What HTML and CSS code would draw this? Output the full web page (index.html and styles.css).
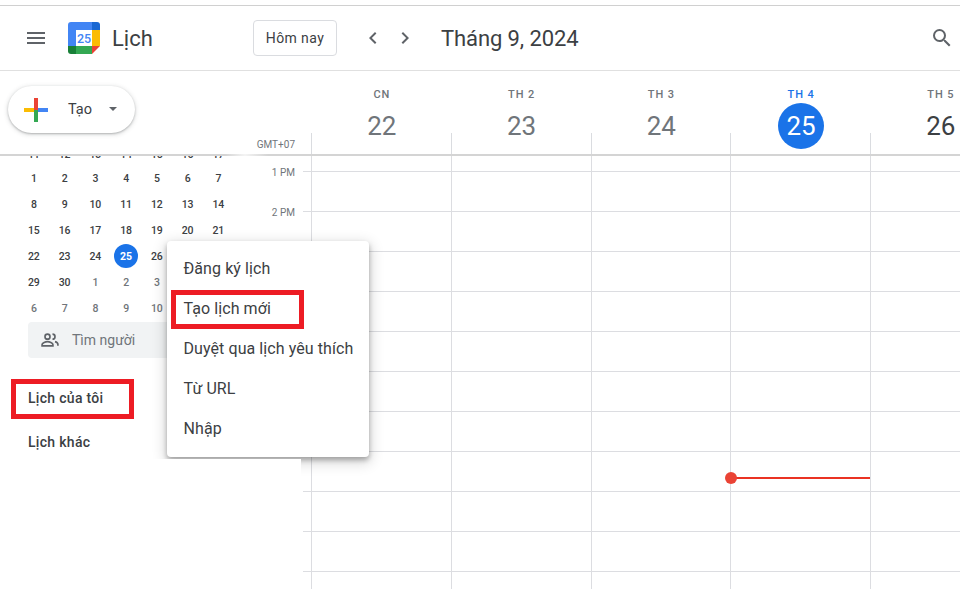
FILE: index.html
```html
<!DOCTYPE html>
<html lang="vi">
<head>
    <meta charset="UTF-8">
    <meta name="viewport" content="width=device-width, initial-scale=1.0">
    <title>Lịch</title>
    <link rel="stylesheet" href="styles.css">
</head>
<body>
    <div class="page">
        <header class="topbar">
            <div class="brand">
                <svg class="icon" viewBox="0 0 24 24"><path d="M3 18h18v-2H3v2zm0-5h18v-2H3v2zm0-7v2h18V6H3z"/></svg>
                <svg class="logo" viewBox="0 0 32 32">
                    <path fill="#4285f4" d="M3 0h21v8H8v16H0V3a3 3 0 0 1 3-3z"/>
                    <path fill="#1967d2" d="M24 0h5a3 3 0 0 1 3 3v5h-8z"/>
                    <rect fill="#fbbc04" x="24" y="8" width="8" height="16"/>
                    <rect fill="#34a853" x="8" y="24" width="16" height="8"/>
                    <path fill="#188038" d="M0 24h8v8H3a3 3 0 0 1-3-3z"/>
                    <polygon fill="#ea4335" points="24,24 32,24 24,32"/>
                    <rect fill="#fff" x="8" y="8" width="16" height="16"/>
                    <text class="logo-num" x="16" y="20.6" text-anchor="middle">25</text>
                </svg>
                <span class="brand-name">Lịch</span>
            </div>
            <button class="today">Hôm nay</button>
            <div class="nav">
                <svg class="icon" viewBox="0 0 24 24"><path d="M15.41 7.41L14 6l-6 6 6 6 1.41-1.41L10.83 12z"/></svg>
                <svg class="icon" viewBox="0 0 24 24"><path d="M10 6L8.59 7.41 13.17 12l-4.58 4.59L10 18l6-6z"/></svg>
            </div>
            <div class="month">Tháng 9, 2024</div>
            <svg class="icon search" viewBox="0 0 24 24"><path d="M15.5 14h-.79l-.28-.27A6.471 6.471 0 0 0 16 9.5 6.5 6.5 0 1 0 9.5 16c1.61 0 3.09-.59 4.23-1.57l.27.28v.79l5 4.99L20.49 19l-4.99-5zm-6 0C7.01 14 5 11.99 5 9.5S7.01 5 9.5 5 14 7.01 14 9.5 11.99 14 9.5 14z"/></svg>
        </header>

        <div class="week-head">
            <div class="create-wrap">
                <button class="create">
                    <svg class="plus" viewBox="0 0 24 24">
                        <rect fill="#fbbc04" x="0" y="10" width="12" height="4"/>
                        <rect fill="#4285f4" x="12" y="10" width="12" height="4"/>
                        <rect fill="#34a853" x="10" y="12" width="4" height="12"/>
                        <rect fill="#ea4335" x="10" y="0" width="4" height="12"/>
                    </svg>
                    <span class="create-text">Tạo</span>
                    <span class="caret"></span>
                </button>
            </div>
            <div class="gmt">GMT+07</div>
            <div class="day"><div class="day-name">CN</div><div class="day-num">22</div></div>
            <div class="day"><div class="day-name">TH 2</div><div class="day-num">23</div></div>
            <div class="day"><div class="day-name">TH 3</div><div class="day-num">24</div></div>
            <div class="day today-col"><div class="day-name">TH 4</div><div class="day-num">25</div></div>
            <div class="day next-col"><div class="day-name">TH 5</div><div class="day-num">26</div></div>
        </div>
        <div class="rule"></div>

        <div class="week-body">
            <aside class="sidebar">
                <div class="mini">
                    <span>11</span><span>12</span><span>13</span><span>14</span><span>15</span><span>16</span><span>17</span>
                    <span>1</span><span>2</span><span>3</span><span>4</span><span>5</span><span>6</span><span>7</span>
                    <span>8</span><span>9</span><span>10</span><span>11</span><span>12</span><span>13</span><span>14</span>
                    <span>15</span><span>16</span><span>17</span><span>18</span><span>19</span><span>20</span><span>21</span>
                    <span>22</span><span>23</span><span>24</span><span class="picked">25</span><span>26</span><span></span><span></span>
                    <span>29</span><span>30</span><span class="off">1</span><span class="off">2</span><span class="off">3</span><span></span><span></span>
                    <span class="off">6</span><span class="off">7</span><span class="off">8</span><span class="off">9</span><span class="off">10</span><span></span><span></span>
                </div>
                <div class="people">
                    <svg class="people-icon" viewBox="0 0 24 24">
                        <circle cx="9" cy="8" r="3"/>
                        <path d="M2.5 19v-1.5c0-2.3 4.3-3.5 6.5-3.5s6.5 1.200 6.500 3.500V19z"/>
                        <path d="M15 5a3 3 0 0 1 0 6"/>
                        <path d="M18 14c2 .5 3.500 1.500 3.500 3.500V19"/>
                    </svg>
                    <span>Tìm người</span>
                </div>
                <div class="side-title mine">Lịch của tôi</div>
                <div class="side-title other">Lịch khác</div>
            </aside>
            <div class="hours">
                <div class="hour">1 PM</div>
                <div class="hour">2 PM</div>
            </div>
            <div class="lines">
                <div class="col"></div>
                <div class="col"></div>
                <div class="col"></div>
                <div class="col"><div class="now"></div></div>
                <div class="col"></div>
            </div>
        </div>

        <!-- phan trang che bong menu o goc duoi ben trai -->
        <div class="patch"></div>

        <div class="menu">
            <div class="menu-item">Đăng ký lịch</div>
            <div class="menu-item">Tạo lịch mới</div>
            <div class="menu-item">Duyệt qua lịch yêu thích</div>
            <div class="menu-item">Từ URL</div>
            <div class="menu-item">Nhập</div>
        </div>

        <!-- khung do danh dau -->
        <div class="mark mark-new"></div>
        <div class="mark mark-mine"></div>
    </div>
</body>
</html>
```

FILE: styles.css
```css
* {
    box-sizing: border-box;
}
body {
    margin: 0;
    background: #fff;
    font-family: Roboto, Arial, sans-serif;
    color: #3c4043;
}
.page {
    position: relative;
    width: 960px;
    height: 589px;
    padding-top: 5px;
    overflow: hidden;
}
.icon {
    width: 24px;
    height: 24px;
    fill: #5f6368;
    flex: none;
}
.topbar {
    display: flex;
    align-items: center;
    height: 66px;
    border-top: 1px solid #d0d0d0;
    border-bottom: 1px solid #e0e0e0;
    padding-left: 24px;
}
.brand {
    display: flex;
    align-items: center;
    width: 229px;
}
.logo {
    width: 32px;
    height: 32px;
    margin-left: 20px;
}
.logo-num {
    font-family: Roboto, Arial, sans-serif;
    font-size: 12.5px;
    font-weight: 500;
    fill: #4285f4;
}
.brand-name {
    margin-left: 12px;
    font-size: 22px;
    color: #3c4043;
}
.today {
    width: 84px;
    height: 36px;
    padding: 0;
    background: #fff;
    border: 1px solid #dadce0;
    border-radius: 4px;
    font-family: Roboto, Arial, sans-serif;
    font-size: 14px;
    font-weight: 400;
    letter-spacing: 0.4px;
    color: #3c4043;
}
.nav {
    display: flex;
    gap: 8px;
    margin-left: 24px;
}
.month {
    margin-left: 24px;
    font-size: 22px;
    letter-spacing: -0.1px;
    color: #3c4043;
}
.search {
    margin-left: auto;
    margin-right: 6px;
}
.week-head {
    display: flex;
    height: 83px;
}
.create-wrap {
    width: 256px;
    flex: none;
    padding: 15px 0 0 8px;
}
.create {
    display: flex;
    align-items: center;
    width: 127px;
    height: 47px;
    padding: 0 0 1px 16px;
    background: #fff;
    border: none;
    border-radius: 24px;
    box-shadow: 0 1px 2px rgba(60,64,67,0.3), 0 1px 4px 1px rgba(60,64,67,0.15);
    font-family: Roboto, Arial, sans-serif;
}
.plus {
    width: 24px;
    height: 24px;
    margin-top: 1px;
}
.create-text {
    margin-left: 20px;
    font-size: 14.5px;
    font-weight: 400;
    color: #3c4043;
}
.caret {
    margin-left: 17px;
    border-left: 4.500px solid transparent;
    border-right: 4.500px solid transparent;
    border-top: 4.500px solid #5f6368;
}
.gmt {
    width: 55px;
    flex: none;
    align-self: flex-end;
    margin-bottom: 3px;
    padding-right: 16px;
    font-size: 10px;
    line-height: 12px;
    text-align: right;
    color: #70757a;
}
.day {
    position: relative;
    width: 139.75px;
    flex: none;
    display: flex;
    flex-direction: column;
    align-items: center;
    padding: 17px 0 0 2px;
}
.day::before {
    content: "";
    position: absolute;
    left: 0;
    bottom: 0;
    width: 1px;
    height: 21px;
    background: #dadce0;
}
.day-name {
    font-size: 11px;
    font-weight: 500;
    line-height: 14px;
    letter-spacing: 0.9px;
    color: #70757a;
}
.day-num {
    display: flex;
    align-items: center;
    justify-content: center;
    width: 46px;
    height: 46px;
    margin-top: 1px;
    border-radius: 50%;
    font-size: 26px;
    color: #70757a;
}
.today-col .day-name {
    color: #1a73e8;
}
.today-col .day-num {
    background: #1a73e8;
    color: #fff;
}
.next-col .day-num {
    color: #3c4043;
}
.rule {
    height: 2px;
    background: linear-gradient(to right, #d4d4d4 225px, #f4f4f4 245px, #d4d4d4 268px);
}
.week-body {
    display: flex;
    height: 433px;
}
.sidebar {
    width: 256px;
    flex: none;
    overflow: hidden;
}
.mini {
    display: grid;
    grid-template-columns: repeat(7, 30.75px);
    grid-template-rows: 22px repeat(6, 26px);
    margin-top: -13px;
    padding-left: 18.5px;
    font-size: 10.5px;
    font-weight: 500;
    color: #3c4043;
}
.mini span {
    display: flex;
    align-items: center;
    justify-content: center;
}
.mini .off {
    color: #70757a;
}
.mini .picked {
    width: 24px;
    height: 24px;
    align-self: center;
    justify-self: center;
    border-radius: 50%;
    background: #1a73e8;
    color: #fff;
    font-weight: 700;
}
.people {
    display: flex;
    align-items: center;
    width: 210px;
    height: 36px;
    margin: 1px 0 0 28px;
    padding-left: 12px;
    background: #f1f3f4;
    border-radius: 4px;
    font-size: 14px;
    color: #70757a;
}
.people-icon {
    width: 20px;
    height: 20px;
    margin-right: 12px;
    fill: none;
    stroke: #5f6368;
    stroke-width: 2;
}
.side-title {
    margin-left: 28px;
    font-size: 14px;
    font-weight: 500;
    line-height: 18px;
    letter-spacing: 0.3px;
    color: #3c4043;
}
.mine {
    margin-top: 31px;
}
.other {
    margin-top: 26px;
}
.hours {
    width: 47px;
    flex: none;
    padding: 11px 8px 0 0;
    text-align: right;
    font-size: 10px;
    color: #70757a;
}
.hour {
    height: 40px;
    line-height: 12px;
}
.lines {
    display: flex;
    flex: 1;
    padding-left: 8px;
    background-image: linear-gradient(#dcdde1 1px, transparent 1px);
    background-size: 100% 40px;
    background-position: 0 15px;
}
.col {
    position: relative;
    width: 139.75px;
    flex: none;
    border-left: 1px solid #dcdde1;
}
.now {
    position: absolute;
    left: 0;
    top: 321px;
    width: 140px;
    height: 2px;
    background: #ea3323;
}
.now::before {
    content: "";
    position: absolute;
    left: -6px;
    top: -5px;
    width: 12px;
    height: 12px;
    border-radius: 50%;
    background: #ea4335;
}
.patch {
    position: absolute;
    left: 0;
    top: 459px;
    width: 301px;
    height: 130px;
    background: #fff;
    z-index: 2;
}
.menu {
    position: absolute;
    left: 167px;
    top: 241px;
    width: 202px;
    height: 216px;
    padding-top: 8px;
    background: #fff;
    border-radius: 4px;
    box-shadow: 0 3px 5px rgba(0,0,0,0.28), 0 4px 14px 2px rgba(0,0,0,0.16);
    z-index: 1;
}
.menu-item {
    height: 40px;
    padding-left: 16.5px;
    font-size: 16px;
    line-height: 40px;
    letter-spacing: 0.08px;
    color: #3c4043;
    white-space: nowrap;
}
.mark {
    position: absolute;
    border: 5px solid #ed1c24;
    z-index: 3;
}
.mark-new {
    left: 171px;
    top: 290px;
    width: 133px;
    height: 39px;
}
.mark-mine {
    left: 11px;
    top: 379px;
    width: 123px;
    height: 40px;
}
```
